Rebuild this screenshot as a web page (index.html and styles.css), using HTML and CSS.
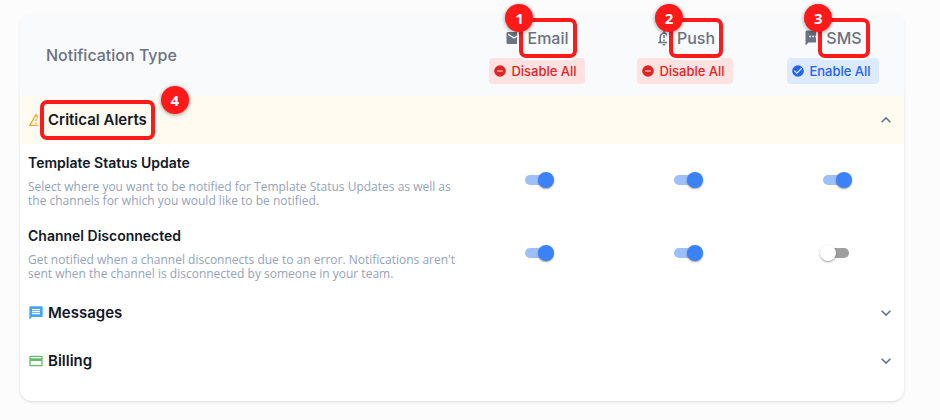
FILE: index.html
```html
<!DOCTYPE html>
<html lang="en">
<head>
<meta charset="utf-8">
<meta name="viewport" content="width=device-width, initial-scale=1">
<title>Notification settings</title>
<link rel="stylesheet" href="styles.css">
</head>
<body>
<main class="card">
  <header class="head">
    <h2 class="head-title">Notification Type</h2>
    <div class="channel">
      <div class="channel-name">
        <svg class="icon-md" viewBox="0 0 24 24"><path d="M20 4H4c-1.100 0-2 .9-2 2v12c0 1.100.9 2 2 2h16c1.100 0 2-.9 2-2V6c0-1.100-.9-2-2-2zm0 4-8 5-8-5V6l8 5 8-5z"/></svg>
        <span class="marked">Email<b class="badge">1</b></span>
      </div>
      <button class="pill pill-off" type="button">
        <svg class="icon-sm" viewBox="0 0 24 24"><path d="M12 2a10 10 0 1 0 0 20 10 10 0 0 0 0-20zm5 11H7v-2h10z"/></svg>
        Disable All
      </button>
    </div>
    <div class="channel">
      <div class="channel-name">
        <svg class="icon-md" viewBox="0 0 24 24"><path d="M12 22a2 2 0 0 0 2-2h-4a2 2 0 0 0 2 2zm6-6v-5c0-3.070-1.630-5.640-4.500-6.320V4a1.500 1.500 0 0 0-3 0v.68C7.640 5.360 6 7.920 6 11v5l-2 2v1h16v-1zm-2 1H8v-6c0-2.480 1.510-4.500 4-4.500s4 2.020 4 4.500zM11 8h2v4h-2zm0 6h2v2h-2z"/></svg>
        <span class="marked">Push<b class="badge">2</b></span>
      </div>
      <button class="pill pill-off" type="button">
        <svg class="icon-sm" viewBox="0 0 24 24"><path d="M12 2a10 10 0 1 0 0 20 10 10 0 0 0 0-20zm5 11H7v-2h10z"/></svg>
        Disable All
      </button>
    </div>
    <div class="channel">
      <div class="channel-name">
        <svg class="icon-md" viewBox="0 0 24 24"><path d="M20 2H4c-1.100 0-2 .9-2 2v18l4-4h14c1.100 0 2-.9 2-2V4c0-1.100-.9-2-2-2zM9 11H7V9h2zm4 0h-2V9h2zm4 0h-2V9h2z"/></svg>
        <span class="marked">SMS<b class="badge">3</b></span>
      </div>
      <button class="pill pill-on" type="button">
        <svg class="icon-sm" viewBox="0 0 24 24"><path d="M12 2a10 10 0 1 0 0 20 10 10 0 0 0 0-20zm-2 15-5-5 1.410-1.410L10 14.170l7.590-7.590L19 8z"/></svg>
        Enable All
      </button>
    </div>
  </header>

  <section>
    <button class="group group-open" type="button" aria-expanded="true">
      <svg class="icon-group amber" viewBox="0 0 24 24"><path d="M12 5.990 19.530 19H4.470zM12 2 1 21h22zm1 14h-2v2h2zm0-6h-2v4h2z"/></svg>
      <span class="marked">Critical Alerts<b class="badge badge-after">4</b></span>
      <svg class="chevron" viewBox="0 0 24 24"><path d="m12 8-6 6 1.410 1.410L12 10.830l4.590 4.580L18 14z"/></svg>
    </button>
    <div class="settings">
      <div class="setting">
        <div>
          <h3 class="setting-title">Template Status Update</h3>
          <p class="setting-text">Select where you want to be notified for Template Status Updates as well as the channels for which you would like to be notified.</p>
        </div>
        <div class="cell"><input class="switch" type="checkbox" role="switch" aria-label="Template Status Update by email" checked></div>
        <div class="cell"><input class="switch" type="checkbox" role="switch" aria-label="Template Status Update by push" checked></div>
        <div class="cell"><input class="switch" type="checkbox" role="switch" aria-label="Template Status Update by SMS" checked></div>
      </div>
      <div class="setting">
        <div>
          <h3 class="setting-title">Channel Disconnected</h3>
          <p class="setting-text">Get notified when a channel disconnects due to an error. Notifications aren't sent when the channel is disconnected by someone in your team.</p>
        </div>
        <div class="cell"><input class="switch" type="checkbox" role="switch" aria-label="Channel Disconnected by email" checked></div>
        <div class="cell"><input class="switch" type="checkbox" role="switch" aria-label="Channel Disconnected by push" checked></div>
        <div class="cell"><input class="switch" type="checkbox" role="switch" aria-label="Channel Disconnected by SMS"></div>
      </div>
    </div>
  </section>

  <button class="group" type="button" aria-expanded="false">
    <svg class="icon-group blue" viewBox="0 0 24 24"><path d="M20 2H4c-1.100 0-2 .9-2 2v18l4-4h14c1.100 0 2-.9 2-2V4c0-1.100-.9-2-2-2zm-2 12H6v-2h12zm0-3H6V9h12zm0-3H6V6h12z"/></svg>
    <span>Messages</span>
    <svg class="chevron" viewBox="0 0 24 24"><path d="M7.410 8.590 12 13.170l4.590-4.580L18 10l-6 6-6-6z"/></svg>
  </button>
  <button class="group" type="button" aria-expanded="false">
    <svg class="icon-group green" viewBox="0 0 24 24"><path d="M20 4H4c-1.110 0-2 .89-2 2v12c0 1.110.89 2 2 2h16c1.110 0 2-.89 2-2V6c0-1.110-.89-2-2-2zm0 14H4v-6h16zm0-10H4V6h16z"/></svg>
    <span>Billing</span>
    <svg class="chevron" viewBox="0 0 24 24"><path d="M7.410 8.590 12 13.170l4.590-4.580L18 10l-6 6-6-6z"/></svg>
  </button>
</main>
</body>
</html>
```
FILE: styles.css
```css
* { box-sizing: border-box; }

body {
  margin: 0;
  padding: 14px 36px 18px 20px;
  background: #fcfcfc;
  color: #111827;
  font-family: Inter, "Liberation Sans", sans-serif;
}

h2, h3, p { margin: 0; }
button { border: 0; font: inherit; cursor: pointer; }
svg { display: block; flex: none; fill: currentColor; }

.card {
  padding-bottom: 16px;
  border-radius: 12px;
  background: #fff;
  box-shadow: 0 1px 3px rgba(0, 0, 0, .14);
}

/* Column headings */
.head {
  display: grid;
  grid-template-columns: minmax(0, 1fr) repeat(3, 148px);
  align-items: center;
  padding: 12px 0;
  border-radius: 12px 12px 0 0;
  background: #f8fafc;
  color: #6b7280;
  box-shadow: 0 -2px 6px #fcfcfc;
}
.head-title {
  padding-left: 26px;
  font-size: 16px;
  font-weight: 500;
  line-height: 24px;
}
.channel {
  display: flex;
  flex-direction: column;
  align-items: center;
  gap: 8px;
  padding-left: 6px;
}
.channel-name {
  display: flex;
  align-items: center;
  gap: 4px;
  font-size: 16px;
  font-weight: 500;
  line-height: 24px;
}
.icon-md { width: 18px; height: 18px; }
.icon-sm { width: 14px; height: 14px; }

.pill {
  display: flex;
  align-items: center;
  gap: 4px;
  padding: 4px 8px 4px 4px;
  border-radius: 4px;
  font-size: 13px;
  font-weight: 500;
  line-height: 18px;
}
.pill-off { background: #fee2e2; color: #dc2626; }
.pill-on { background: #dbeafe; color: #2563eb; }

/* Numbered outlines */
.marked { position: relative; }
.marked::after {
  content: "";
  position: absolute;
  inset: -8px;
  border: 4px solid #ff1a1a;
  border-radius: 7px;
  box-shadow: 0 0 0 2px rgba(255, 255, 255, .9);
}
.badge {
  position: absolute;
  z-index: 1;
  top: -22px;
  left: -22px;
  width: 28px;
  height: 28px;
  border-radius: 50%;
  background: #ff1a1a;
  color: #fff;
  box-shadow: 0 1px 4px rgba(0, 0, 0, .4);
  font-family: "Open Sans", "Noto Sans", sans-serif;
  font-size: 15px;
  font-weight: 700;
  line-height: 28px;
  text-align: center;
}
.badge-after { left: calc(100% + 14px); }

/* Collapsible groups */
.group {
  display: flex;
  align-items: center;
  gap: 4px;
  width: 100%;
  padding: 12px 8px;
  background: none;
  color: #111827;
  font-size: 15px;
  font-weight: 600;
  line-height: 24px;
  text-align: left;
}
.group-open { background: #fffbf0; }
.icon-group { width: 16px; height: 16px; }
.amber { color: #f9a825; }
.blue { color: #42a5f5; }
.green { color: #66bb6a; }
.chevron {
  width: 20px;
  height: 20px;
  margin-left: auto;
  color: #64748b;
}

.settings { display: grid; gap: 1px; }
.setting {
  display: grid;
  grid-template-columns: minmax(0, 1fr) repeat(3, 149px);
  align-items: center;
  padding: 8px 0 8px 8px;
}
.setting-title {
  margin-bottom: 6px;
  font-size: 14px;
  font-weight: 600;
  line-height: 22px;
}
.setting-text {
  margin-right: -6px;
  color: #94a3b8;
  font-family: "Open Sans", "Noto Sans", sans-serif;
  font-size: 12px;
  line-height: 14px;
}
.cell {
  display: flex;
  justify-content: center;
  padding-left: 13px;
}

/* Switch: a 26px track with a 16px thumb that overhangs it by 3px */
.switch {
  appearance: none;
  display: flex;
  align-items: center;
  position: relative;
  width: 32px;
  height: 16px;
  margin: 0;
  cursor: pointer;
}
.switch::before {
  content: "";
  position: absolute;
  inset: 3px;
  border-radius: 5px;
  background: #9e9e9e;
}
.switch::after {
  content: "";
  position: relative;
  width: 16px;
  height: 16px;
  border-radius: 50%;
  background: #fff;
  box-shadow: 0 1px 2px rgba(0, 0, 0, .4);
}
.switch:checked { justify-content: flex-end; }
.switch:checked::before { background: #9dc0fa; }
.switch:checked::after { background: #3b82f6; }
```
